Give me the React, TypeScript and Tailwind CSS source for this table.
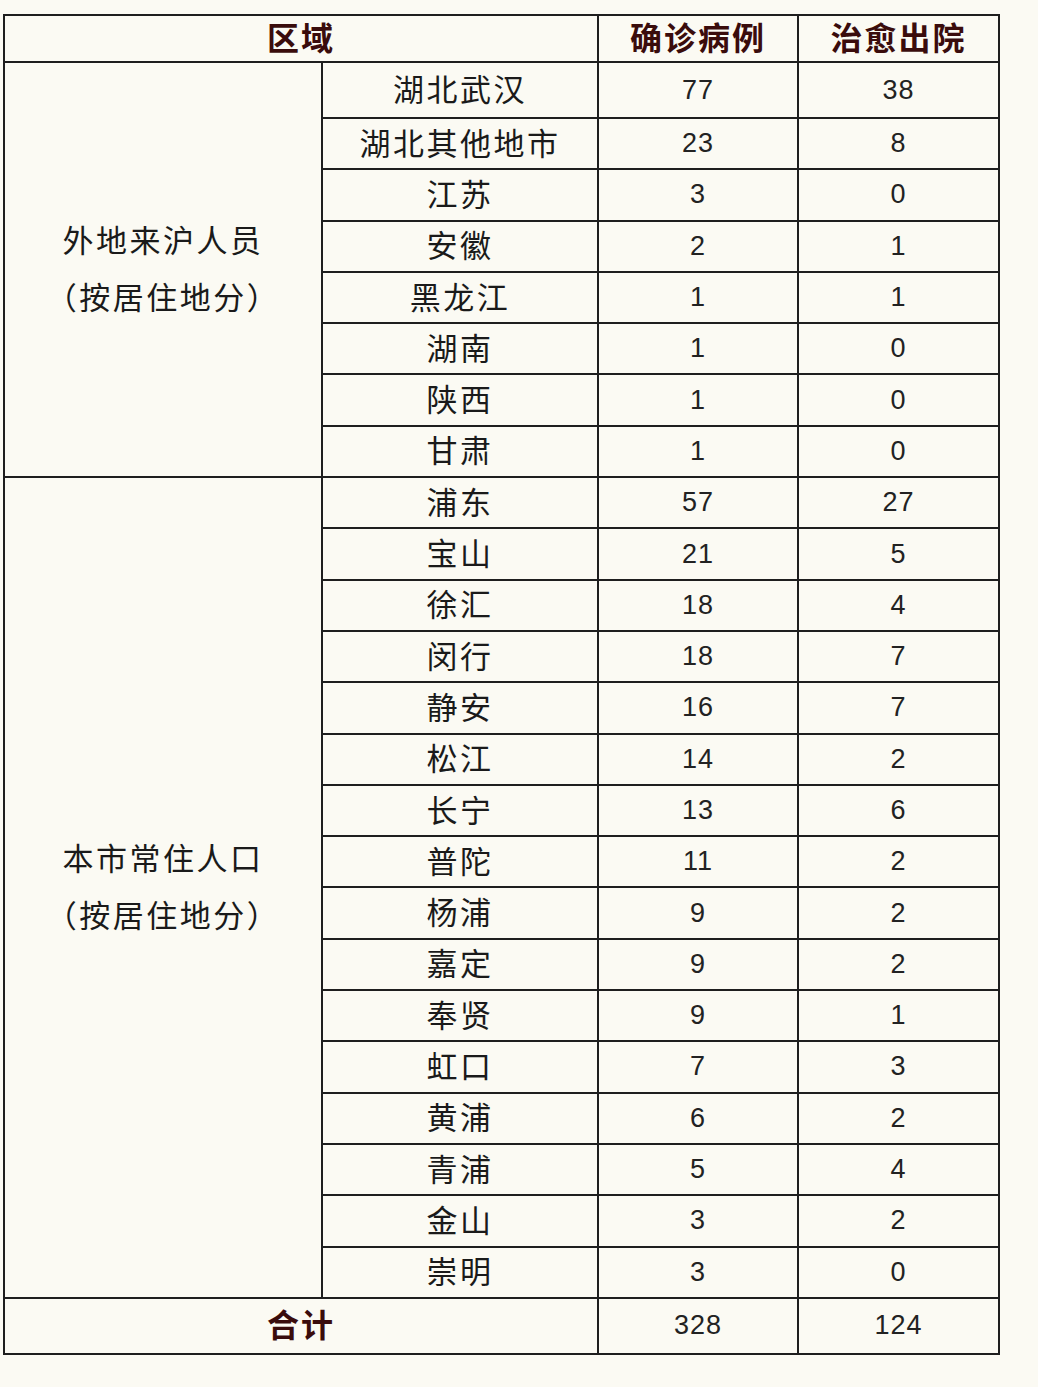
import React from "react";

type Row = { name: string; confirmed: string; cured: string };

const outside: Row[] = [
  { name: "湖北武汉", confirmed: "77", cured: "38" },
  { name: "湖北其他地市", confirmed: "23", cured: "8" },
  { name: "江苏", confirmed: "3", cured: "0" },
  { name: "安徽", confirmed: "2", cured: "1" },
  { name: "黑龙江", confirmed: "1", cured: "1" },
  { name: "湖南", confirmed: "1", cured: "0" },
  { name: "陕西", confirmed: "1", cured: "0" },
  { name: "甘肃", confirmed: "1", cured: "0" },
];

const local: Row[] = [
  { name: "浦东", confirmed: "57", cured: "27" },
  { name: "宝山", confirmed: "21", cured: "5" },
  { name: "徐汇", confirmed: "18", cured: "4" },
  { name: "闵行", confirmed: "18", cured: "7" },
  { name: "静安", confirmed: "16", cured: "7" },
  { name: "松江", confirmed: "14", cured: "2" },
  { name: "长宁", confirmed: "13", cured: "6" },
  { name: "普陀", confirmed: "11", cured: "2" },
  { name: "杨浦", confirmed: "9", cured: "2" },
  { name: "嘉定", confirmed: "9", cured: "2" },
  { name: "奉贤", confirmed: "9", cured: "1" },
  { name: "虹口", confirmed: "7", cured: "3" },
  { name: "黄浦", confirmed: "6", cured: "2" },
  { name: "青浦", confirmed: "5", cured: "4" },
  { name: "金山", confirmed: "3", cured: "2" },
  { name: "崇明", confirmed: "3", cured: "0" },
];

const cjk = "font-['SimSun','Noto_Sans_CJK_SC',sans-serif]";
const cell = "border-2 border-[#1e1e1e] text-center align-middle p-0 leading-none";
const numCell = `${cell} font-['Liberation_Sans',sans-serif] text-[27px] text-[#222] tracking-[1px]`;
const nameCell = `${cell} ${cjk} pb-[5px] text-[31px] text-[#1a1a1a] tracking-[2.5px]`;
const headCell = `${cell} ${cjk} pb-[5px] text-[32px] font-bold text-[#3a0c0c] tracking-[2px]`;

function DataRows({ label, rows, firstTall }: { label: string; rows: Row[]; firstTall?: boolean }) {
  return (
    <>
      {rows.map((r, i) => (
        <tr key={r.name} className={firstTall && i === 0 ? "h-[56px]" : "h-[51.3px]"}>
          {i === 0 && (
            <td
              rowSpan={rows.length}
              className={`border-2 border-[#1e1e1e] text-center align-middle p-0 pb-[5px] ${cjk} text-[31px] leading-[57px] tracking-[2.5px] text-[#1a1a1a]`}
            >
              {label}
              <br />
              （按居住地分）
            </td>
          )}
          <td className={nameCell}>{r.name}</td>
          <td className={numCell}>{r.confirmed}</td>
          <td className={numCell}>{r.cured}</td>
        </tr>
      ))}
    </>
  );
}

export default function App() {
  return (
    <div className="min-h-[1387px] w-[1038px] bg-[#fbfaf3] pt-[14px] pl-[3px]">
      <table className="w-[995px] border-collapse table-fixed bg-[#fbfaf3]">
        <colgroup>
          <col className="w-[318px]" />
          <col className="w-[276px]" />
          <col className="w-[200px]" />
          <col className="w-[201px]" />
        </colgroup>
        <tbody>
          <tr className="h-[47px]">
            <td colSpan={2} className={headCell}>区域</td>
            <td className={headCell}>确诊病例</td>
            <td className={headCell}>治愈出院</td>
          </tr>
          <DataRows label="外地来沪人员" rows={outside} firstTall />
          <DataRows label="本市常住人口" rows={local} />
          <tr className="h-[56px]">
            <td colSpan={2} className={headCell}>合计</td>
            <td className={numCell}>328</td>
            <td className={numCell}>124</td>
          </tr>
        </tbody>
      </table>
    </div>
  );
}
